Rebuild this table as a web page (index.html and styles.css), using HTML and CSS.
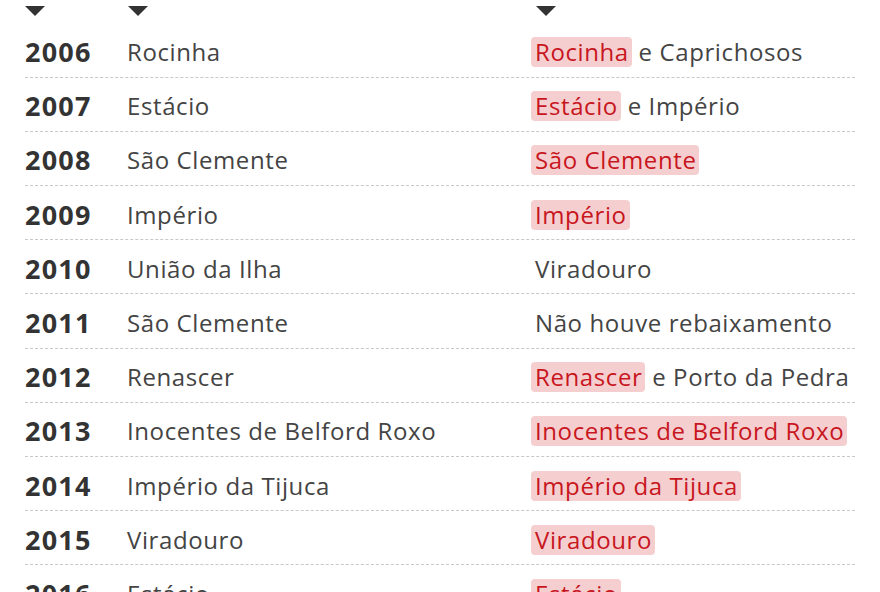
FILE: index.html
```html
<!DOCTYPE html>
<html lang="pt">
<head>
<meta charset="utf-8">
<link rel="stylesheet" href="styles.css">
</head>
<body>
<div class="table">
  <div class="head">
    <span class="arrow"></span>
    <span class="arrow"></span>
    <span class="arrow"></span>
  </div>
  <div class="row"><span class="year">2006</span><span class="name">Rocinha</span><span class="res"><mark class="hl">Rocinha</mark> e Caprichosos</span></div>
  <div class="row"><span class="year">2007</span><span class="name">Estácio</span><span class="res"><mark class="hl">Estácio</mark> e Império</span></div>
  <div class="row"><span class="year">2008</span><span class="name">São Clemente</span><span class="res"><mark class="hl">São Clemente</mark></span></div>
  <div class="row"><span class="year">2009</span><span class="name">Império</span><span class="res"><mark class="hl">Império</mark></span></div>
  <div class="row"><span class="year">2010</span><span class="name">União da Ilha</span><span class="res">Viradouro</span></div>
  <div class="row"><span class="year">2011</span><span class="name">São Clemente</span><span class="res">Não houve rebaixamento</span></div>
  <div class="row"><span class="year">2012</span><span class="name">Renascer</span><span class="res"><mark class="hl">Renascer</mark> e Porto da Pedra</span></div>
  <div class="row"><span class="year">2013</span><span class="name">Inocentes de Belford Roxo</span><span class="res"><mark class="hl">Inocentes de Belford Roxo</mark></span></div>
  <div class="row"><span class="year">2014</span><span class="name">Império da Tijuca</span><span class="res"><mark class="hl">Império da Tijuca</mark></span></div>
  <div class="row"><span class="year">2015</span><span class="name">Viradouro</span><span class="res"><mark class="hl">Viradouro</mark></span></div>
  <div class="row"><span class="year">2016</span><span class="name">Estácio</span><span class="res"><mark class="hl">Estácio</mark></span></div>
</div>
</body>
</html>
```
FILE: styles.css
```css
html, body {
  margin: 0;
  padding: 0;
  background: #fff;
}
body {
  font-family: "Open Sans", "Noto Sans", sans-serif;
  color: #3a3a3a;
  overflow: hidden;
}
.table {
  margin-left: 25px;
  width: 830px;
}
.head {
  display: grid;
  grid-template-columns: 103px 408px 1fr;
  height: 23.5px;
  padding-top: 6px;
  box-sizing: border-box;
}
.arrow {
  width: 0;
  height: 0;
  border-left: 10px solid transparent;
  border-right: 10px solid transparent;
  border-top: 10px solid #333;
}
.row {
  display: grid;
  grid-template-columns: 102px 408px 1fr;
  align-items: center;
  height: 54.2px;
  padding-top: 3px;
  border-bottom: 1px dashed #c8c8c8;
  box-sizing: border-box;
  font-size: 24px;
  letter-spacing: 0.6px;
}
.year {
  font-weight: 700;
  font-size: 27px;
  letter-spacing: 1.2px;
  color: #333;
}
.name {
  color: #444;
}
.res {
  color: #444;
  white-space: nowrap;
}
.hl {
  display: inline-block;
  line-height: 30px;
  background: #f5cfd0;
  color: #c8161e;
  border-radius: 4px;
  padding: 0 3px 0 4px;
  margin-left: -4px;
}
```
